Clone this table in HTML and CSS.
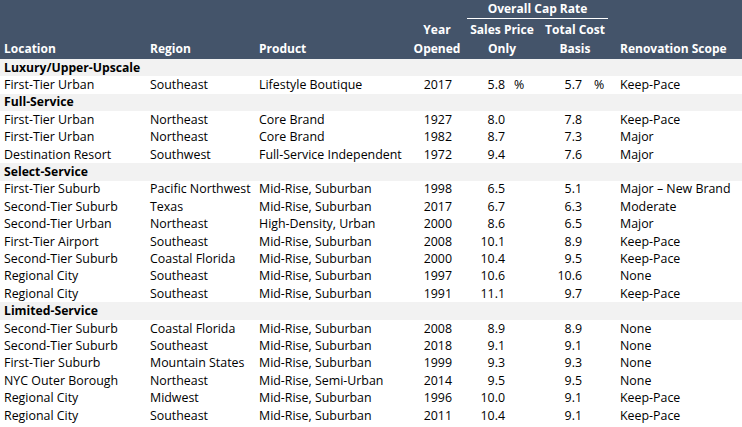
FILE: index.html
```html
<!DOCTYPE html>
<html lang="en">
<head>
<meta charset="utf-8">
<title>Cap Rates</title>
<link rel="stylesheet" href="styles.css">
</head>
<body>
<table class="tbl">
  <colgroup>
    <col class="c-loc"><col class="c-reg"><col class="c-prod"><col class="c-year"><col class="c-sp"><col class="c-tc"><col class="c-ren">
  </colgroup>
  <thead>
    <tr class="h1">
      <th></th><th></th><th></th><th></th>
      <th colspan="2" class="cap"><div class="cap-in">Overall Cap Rate</div></th>
      <th></th>
    </tr>
    <tr class="h2">
      <th></th><th></th><th></th>
      <th class="ctr">Year</th><th class="ctr">Sales Price</th><th class="ctr">Total Cost</th><th></th>
    </tr>
    <tr class="h3">
      <th class="lft">Location</th><th class="lft">Region</th><th class="lft">Product</th>
      <th class="ctr">Opened</th><th class="ctr">Only</th><th class="ctr">Basis</th><th class="lft ren">Renovation Scope</th>
    </tr>
  </thead>
  <tbody>
    <tr class="grp"><td colspan="7">Luxury/Upper-Upscale</td></tr>
    <tr><td>First-Tier Urban</td><td>Southeast</td><td>Lifestyle Boutique</td><td class="yr">2017</td><td><span class="n sp">5.8</span><span class="p sp-p">%</span></td><td><span class="n tc">5.7</span><span class="p tc-p">%</span></td><td class="ren">Keep-Pace</td></tr>
    <tr class="grp"><td colspan="7">Full-Service</td></tr>
    <tr><td>First-Tier Urban</td><td>Northeast</td><td>Core Brand</td><td class="yr">1927</td><td><span class="n sp">8.0</span></td><td><span class="n tc">7.8</span></td><td class="ren">Keep-Pace</td></tr>
    <tr><td>First-Tier Urban</td><td>Northeast</td><td>Core Brand</td><td class="yr">1982</td><td><span class="n sp">8.7</span></td><td><span class="n tc">7.3</span></td><td class="ren">Major</td></tr>
    <tr><td>Destination Resort</td><td>Southwest</td><td>Full-Service Independent</td><td class="yr">1972</td><td><span class="n sp">9.4</span></td><td><span class="n tc">7.6</span></td><td class="ren">Major</td></tr>
    <tr class="grp"><td colspan="7">Select-Service</td></tr>
    <tr><td>First-Tier Suburb</td><td>Pacific Northwest</td><td>Mid-Rise, Suburban</td><td class="yr">1998</td><td><span class="n sp">6.5</span></td><td><span class="n tc">5.1</span></td><td class="ren">Major – New Brand</td></tr>
    <tr><td>Second-Tier Suburb</td><td>Texas</td><td>Mid-Rise, Suburban</td><td class="yr">2017</td><td><span class="n sp">6.7</span></td><td><span class="n tc">6.3</span></td><td class="ren">Moderate</td></tr>
    <tr><td>Second-Tier Urban</td><td>Northeast</td><td>High-Density, Urban</td><td class="yr">2000</td><td><span class="n sp">8.6</span></td><td><span class="n tc">6.5</span></td><td class="ren">Major</td></tr>
    <tr><td>First-Tier Airport</td><td>Southeast</td><td>Mid-Rise, Suburban</td><td class="yr">2008</td><td><span class="n sp">10.1</span></td><td><span class="n tc">8.9</span></td><td class="ren">Keep-Pace</td></tr>
    <tr><td>Second-Tier Suburb</td><td>Coastal Florida</td><td>Mid-Rise, Suburban</td><td class="yr">2000</td><td><span class="n sp">10.4</span></td><td><span class="n tc">9.5</span></td><td class="ren">Keep-Pace</td></tr>
    <tr><td>Regional City</td><td>Southeast</td><td>Mid-Rise, Suburban</td><td class="yr">1997</td><td><span class="n sp">10.6</span></td><td><span class="n tc">10.6</span></td><td class="ren">None</td></tr>
    <tr><td>Regional City</td><td>Southeast</td><td>Mid-Rise, Suburban</td><td class="yr">1991</td><td><span class="n sp">11.1</span></td><td><span class="n tc">9.7</span></td><td class="ren">Keep-Pace</td></tr>
    <tr class="grp"><td colspan="7">Limited-Service</td></tr>
    <tr><td>Second-Tier Suburb</td><td>Coastal Florida</td><td>Mid-Rise, Suburban</td><td class="yr">2008</td><td><span class="n sp">8.9</span></td><td><span class="n tc">8.9</span></td><td class="ren">None</td></tr>
    <tr><td>Second-Tier Suburb</td><td>Southeast</td><td>Mid-Rise, Suburban</td><td class="yr">2018</td><td><span class="n sp">9.1</span></td><td><span class="n tc">9.1</span></td><td class="ren">None</td></tr>
    <tr><td>First-Tier Suburb</td><td>Mountain States</td><td>Mid-Rise, Suburban</td><td class="yr">1999</td><td><span class="n sp">9.3</span></td><td><span class="n tc">9.3</span></td><td class="ren">None</td></tr>
    <tr><td>NYC Outer Borough</td><td>Northeast</td><td>Mid-Rise, Semi-Urban</td><td class="yr">2014</td><td><span class="n sp">9.5</span></td><td><span class="n tc">9.5</span></td><td class="ren">None</td></tr>
    <tr><td>Regional City</td><td>Midwest</td><td>Mid-Rise, Suburban</td><td class="yr">1996</td><td><span class="n sp">10.0</span></td><td><span class="n tc">9.1</span></td><td class="ren">Keep-Pace</td></tr>
    <tr><td>Regional City</td><td>Southeast</td><td>Mid-Rise, Suburban</td><td class="yr">2011</td><td><span class="n sp">10.4</span></td><td><span class="n tc">9.1</span></td><td class="ren">Keep-Pace</td></tr>
  </tbody>
</table>
</body>
</html>
```

FILE: styles.css
```css
html, body {
  margin: 0;
  padding: 0;
  background: #ffffff;
}

body {
  font-family: "Open Sans", "Noto Sans", "Liberation Sans", sans-serif;
  font-size: 12.4px;
  color: #000000;
}

.tbl {
  width: 742px;
  border-collapse: collapse;
  table-layout: fixed;
}

.c-loc { width: 146px; }
.c-reg { width: 109px; }
.c-prod { width: 155px; }
.c-year { width: 54px; }
.c-sp { width: 76px; }
.c-tc { width: 70px; }
.c-ren { width: 132px; }

.tbl th,
.tbl td {
  padding: 0;
  white-space: nowrap;
  overflow: visible;
}

.tbl thead tr {
  background: #44546a;
  color: #ffffff;
}

.tbl thead th {
  font-size: 12px;
  font-weight: 700;
  line-height: 16px;
  vertical-align: middle;
}

.tbl .h1 th { height: 20px; }
.tbl .h2 th { height: 19px; }
.tbl .h3 th { height: 20px; }

.cap-in {
  margin: 0 2px 0 3px;
  text-align: center;
  border-bottom: 1px solid #ffffff;
  padding-bottom: 1px;
}

.tbl th.ctr { text-align: center; }
.tbl th.lft { text-align: left; padding-left: 4px; }
.tbl th.ren { padding-left: 10px; }

.tbl tbody td {
  height: 17.4px;
  line-height: 16px;
  vertical-align: middle;
  padding-left: 4px;
}

.tbl tbody tr.grp td {
  background: #f2f2f2;
  font-weight: 700;
  font-size: 12.2px;
}

.tbl tbody td.yr {
  text-align: right;
  padding-left: 0;
  padding-right: 12px;
}

.n {
  display: inline-block;
  text-align: right;
}

.n.sp { width: 37px; }
.n.tc { width: 38px; }

.p { display: inline-block; }
.sp-p { padding-left: 9px; }
.tc-p { padding-left: 12px; }

.tbl tbody td.ren { padding-left: 10px; }
```
